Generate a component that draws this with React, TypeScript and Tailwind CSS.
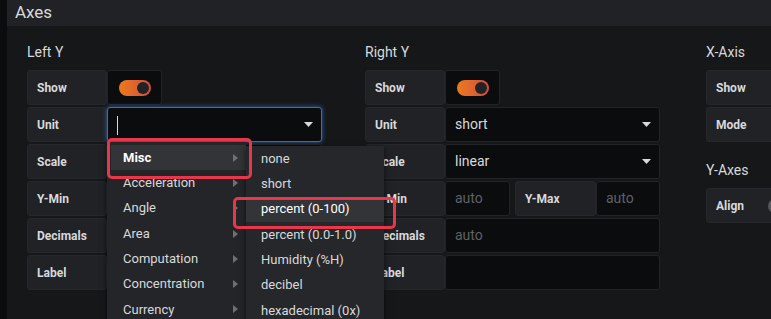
import React from "react";

const Caret = () => (
  <svg width="9" height="5" viewBox="0 0 9 5" className="shrink-0">
    <path d="M0 0 L9 0 L4.5 5 Z" fill="#d8d9da" />
  </svg>
);

const Chevron = () => (
  <svg width="5" height="8" viewBox="0 0 5 8" className="shrink-0">
    <path d="M0 0 L5 4 L0 8 Z" fill="#6f7074" />
  </svg>
);

const Toggle = () => (
  <div className="w-[32px] h-[16px] rounded-full bg-gradient-to-r from-[#eb7b18] to-[#d44a3a] relative">
    <div className="absolute right-[2px] top-[2px] w-[12px] h-[12px] rounded-full bg-[#222326]" />
  </div>
);

const Label = ({ children, w = "w-[80px]" }: { children: React.ReactNode; w?: string }) => (
  <div className={`${w} h-full shrink-0 rounded-[3px] bg-[#202226] border border-[#25272b] pl-[9px] flex items-center text-[12px] font-bold text-[#d8d9da]`}>
    {children}
  </div>
);

const Input = ({
  w,
  children,
  placeholder,
  select,
  focus,
}: {
  w: string;
  children?: React.ReactNode;
  placeholder?: string;
  select?: boolean;
  focus?: boolean;
}) => (
  <div
    className={`${w} h-full shrink-0 rounded-[3px] bg-[#0b0c0e] border ${
      focus ? "border-[#4b6a9b] shadow-[0_0_5px_#2f5fa8]" : "border-[#222326]"
    } pl-[9px] pr-[8px] flex items-center justify-between text-[14px]`}
  >
    <span className={placeholder ? "text-[#5f6166]" : "text-[#d8d9da]"}>{placeholder ?? children}</span>
    {select && <Caret />}
  </div>
);

const ToggleBox = () => (
  <div className="w-[55px] h-full rounded-[3px] bg-[#0b0c0e] border border-[#222326] pl-[11px] flex items-center">
    <Toggle />
  </div>
);

const Row = ({ children }: { children: React.ReactNode }) => <div className="h-[35px] flex">{children}</div>;

const Title = ({ children }: { children: React.ReactNode }) => (
  <div className="h-[20px] leading-[20px] text-[14px] text-[#d8d9da] mb-[8px]">{children}</div>
);

const AxisColumn = ({ title, unit, unitFocus, w }: { title: string; unit: string; unitFocus?: boolean; w: string }) => (
  <div className={`${w} shrink-0 flex flex-col`}>
    <Title>{title}</Title>
    <div className="flex flex-col gap-[2px]">
      <Row>
        <Label>Show</Label>
        <ToggleBox />
      </Row>
      <Row>
        <Label>Unit</Label>
        <Input w="w-[215px]" select focus={unitFocus}>
          {unitFocus ? <span className="inline-block w-[1px] h-[19px] bg-[#d8d9da] align-middle" /> : unit}
        </Input>
      </Row>
      <Row>
        <Label>Scale</Label>
        <Input w="w-[215px]" select>
          linear
        </Input>
      </Row>
      <Row>
        <Label>Y-Min</Label>
        <Input w="w-[65px]" placeholder="auto" />
        <div className="w-[5px]" />
        <Label w="w-[81px]">Y-Max</Label>
        <Input w="w-[64px]" placeholder="auto" />
      </Row>
      <Row>
        <Label>Decimals</Label>
        <Input w="w-[215px]" placeholder="auto" />
      </Row>
      <Row>
        <Label>Label</Label>
        <Input w="w-[215px]" />
      </Row>
    </div>
  </div>
);

const leftItems = ["Misc", "Acceleration", "Angle", "Area", "Computation", "Concentration", "Currency"];
const rightItems = ["none", "short", "percent (0-100)", "percent (0.0-1.0)", "Humidity (%H)", "decibel", "hexadecimal (0x)"];

export default function App() {
  return (
    <div className="w-[771px] h-[319px] bg-[#0b0c0e] flex overflow-hidden relative font-['Roboto','Noto_Sans',sans-serif]">
      <div className="w-[7px] shrink-0" />
      <div className="flex-1 flex flex-col bg-[#161719]">
        <div className="h-[26px] shrink-0 bg-[#202226] pl-[8px] flex items-center text-[17px] text-[#d8d9da]">Axes</div>
        <div className="flex pl-[20px] pt-[16px]">
          <AxisColumn title="Left Y" unit="" unitFocus w="w-[338px]" />
          <AxisColumn title="Right Y" unit="short" w="w-[341px]" />
          <div className="flex-1 flex flex-col">
            <Title>X-Axis</Title>
            <div className="flex flex-col gap-[2px]">
              <Row>
                <Label w="w-[100px]">Show</Label>
              </Row>
              <Row>
                <Label w="w-[100px]">Mode</Label>
              </Row>
            </div>
            <div className="h-[18px]" />
            <Title>Y-Axes</Title>
            <Row>
              <div className="w-[100px] h-full shrink-0 rounded-[3px] bg-[#202226] border border-[#25272b] pl-[9px] flex items-center text-[12px] font-bold text-[#d8d9da]">
                <span className="w-[52px] shrink-0">Align</span>
                <div className="w-[14px] h-[14px] rounded-full bg-[#55575c] shrink-0" />
              </div>
            </Row>
          </div>
        </div>
      </div>

      {/* Unit dropdown menu */}
      <div className="absolute left-[107px] top-[142px] w-[139px] h-[200px] bg-[#242529] shadow-[0_2px_6px_rgba(0,0,0,0.6)] pt-[3px]">
        {leftItems.map((it, i) => (
          <div
            key={it}
            className={`h-[25.3px] ml-[4px] pl-[12px] pr-[8px] flex items-center justify-between text-[13px] ${
              i === 0 ? "bg-[#333438] text-white font-bold" : "text-[#d8d9da]"
            }`}
          >
            <span>{it}</span>
            <Chevron />
          </div>
        ))}
      </div>
      <div className="absolute left-[246px] top-[146px] w-[138px] h-[200px] bg-[#26272b] shadow-[0_2px_6px_rgba(0,0,0,0.6)]">
        {rightItems.map((it, i) => (
          <div
            key={it}
            className={`h-[25.3px] pl-[15px] flex items-center text-[13px] ${
              i === 2 ? "bg-[#333438] text-white" : "text-[#d8d9da]"
            }`}
          >
            {it}
          </div>
        ))}
      </div>

      {/* Annotation boxes */}
      <div className="absolute left-[107px] top-[138px] w-[145px] h-[41px] border-[3px] border-[#e8364a] rounded-[5px]" />
      <div className="absolute left-[233px] top-[197px] w-[163px] h-[32px] border-[3px] border-[#e8364a] rounded-[5px]" />
    </div>
  );
}
